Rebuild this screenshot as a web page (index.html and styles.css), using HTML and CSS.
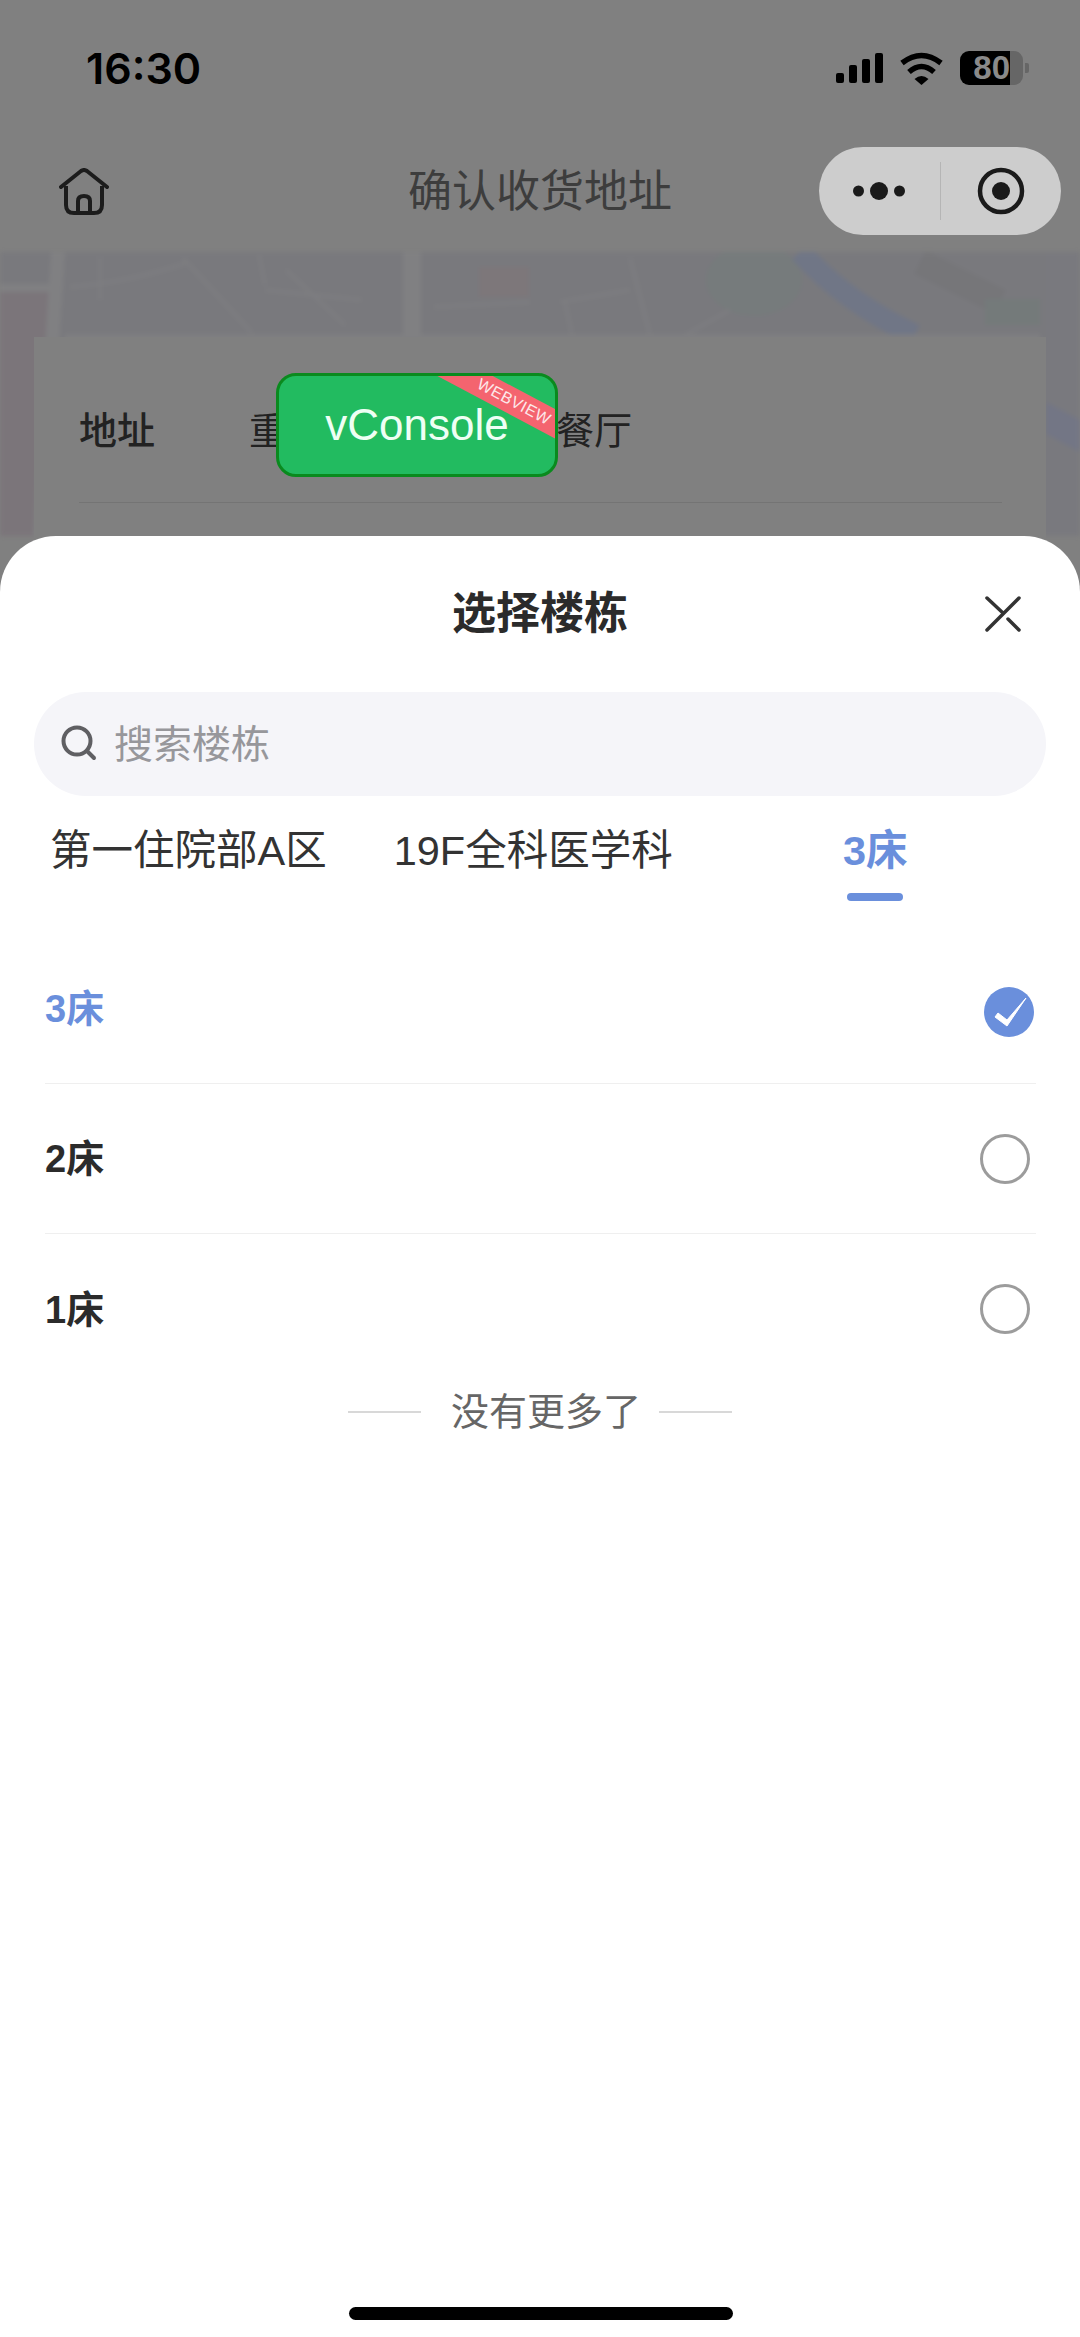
FILE: index.html
```html
<!DOCTYPE html>
<html lang="zh-CN">

<head>
    <meta charset="UTF-8" />
    <meta name="viewport" content="width=device-width, initial-scale=1.0" />
    <title>确认收货地址</title>
    <link rel="stylesheet" href="styles.css">
</head>

<body>
    <div class="screen">
        <!-- Status bar -->
        <div class="status-bar">
            <span class="time">16:30</span>
            <div class="status-icons">
                <svg width="47" height="30" viewBox="0 0 47 30">
                    <rect x="0" y="20" width="8" height="10" rx="2" fill="#000" />
                    <rect x="13" y="12" width="8" height="18" rx="2" fill="#000" />
                    <rect x="26" y="6" width="8" height="24" rx="2" fill="#000" />
                    <rect x="39" y="0" width="8" height="30" rx="2" fill="#000" />
                </svg>
                <svg width="45" height="33" viewBox="0 0 45 33">
                    <path d="M3 11 Q22.5 -4 42 11" fill="none" stroke="#000" stroke-width="5.5" />
                    <path d="M10 20 Q22.5 9 35 20" fill="none" stroke="#000" stroke-width="5.5" />
                    <path d="M15.5 27 Q22.5 21 29.5 27 L22.5 33 Z" fill="#000" />
                </svg>
                <div class="battery">
                    <div class="battery-body">
                        <span class="battery-level">80</span>
                    </div>
                    <div class="battery-tip"></div>
                </div>
            </div>
        </div>

        <!-- Nav bar -->
        <div class="nav-bar">
            <svg class="nav-home" width="50" height="47" viewBox="0 0 50 47">
                <path d="M2 19 L22 3 Q25 1 28 3 L48 19" fill="none" stroke="#1c1c1c" stroke-width="4" stroke-linecap="round" />
                <path d="M7 18 V37 Q7 45 15 45 H35 Q43 45 43 37 V18" fill="none" stroke="#1c1c1c" stroke-width="4" />
                <path d="M19 45 V33 Q19 28 25 28 Q31 28 31 33 V45" fill="none" stroke="#1c1c1c" stroke-width="4" />
            </svg>
            <span class="nav-title">确认收货地址</span>
            <div class="capsule">
                <div class="capsule-part">
                    <svg width="52" height="18" viewBox="0 0 52 18">
                        <circle cx="5.5" cy="9" r="5.5" fill="#1a1a1a" />
                        <circle cx="26" cy="9" r="9" fill="#1a1a1a" />
                        <circle cx="46.5" cy="9" r="5.5" fill="#1a1a1a" />
                    </svg>
                </div>
                <div class="capsule-line"></div>
                <div class="capsule-part">
                    <svg width="48" height="48" viewBox="0 0 48 48">
                        <circle cx="24" cy="24" r="21" fill="none" stroke="#1a1a1a" stroke-width="4.5" />
                        <circle cx="24" cy="24" r="9" fill="#1a1a1a" />
                    </svg>
                </div>
            </div>
        </div>

        <!-- Map behind the address card -->
        <svg class="map" width="1080" height="284" viewBox="0 0 1080 284">
            <rect width="1080" height="284" fill="#79797d" />
            <rect x="0" y="40" width="50" height="244" fill="#7b757a" />
            <rect x="1046" y="0" width="34" height="284" fill="#79797e" />
            <path d="M1046 150 L1080 168 V200 L1046 182 Z" fill="#737685" />
            <ellipse cx="754" cy="28" rx="48" ry="36" fill="#767b7c" />
            <rect x="479" y="15" width="50" height="30" fill="#7d777a" />
            <path d="M920 10 L1000 50" stroke="#767679" stroke-width="26" />
            <path d="M985 60 L1040 60" stroke="#747a7a" stroke-width="26" />
            <path d="M800 0 Q845 50 915 83" fill="none" stroke="#707686" stroke-width="22" />
            <g fill="none" stroke="#808082">
                <path d="M0 36 L50 36" stroke-width="8" />
                <path d="M58 0 L40 284" stroke-width="14" />
                <path d="M412 0 L412 85" stroke-width="18" />
                <path d="M65 85 L1040 85" stroke-width="5" />
            </g>
            <g fill="none" stroke="#7e7e81" stroke-width="3">
                <path d="M100 5 L100 48" />
                <path d="M70 35 Q130 30 186 11" />
                <path d="M183 6 L252 81" />
                <path d="M259 3 L265 33" />
                <path d="M265 38 L362 48" />
                <path d="M286 18 L345 73" />
                <path d="M434 55 L530 50" />
                <path d="M560 50 L630 38" />
                <path d="M630 6 L650 83" />
                <path d="M565 50 L572 83" />
                <path d="M685 83 L730 58" />
            </g>
        </svg>

        <!-- Address card -->
        <div class="card">
            <div class="card-row">
                <span class="card-label">地址</span>
                <div class="card-value">
                    <span>重</span>
                    <span>餐厅</span>
                </div>
            </div>
            <div class="card-line"></div>
        </div>

        <!-- vConsole button -->
        <div class="vconsole">
            vConsole
            <div class="webview-tag">WEBVIEW</div>
        </div>

        <!-- Bottom sheet -->
        <div class="sheet">
            <div class="sheet-head">
                <span class="sheet-title">选择楼栋</span>
                <svg class="sheet-close" width="36" height="36" viewBox="0 0 36 36">
                    <path d="M2 2 L18 17 M23 23 L34 34 M34 2 L2 34" stroke="#333" stroke-width="3.5" stroke-linecap="round" fill="none" />
                </svg>
            </div>

            <div class="search">
                <svg class="search-icon" width="36" height="36" viewBox="0 0 36 36">
                    <circle cx="16" cy="16" r="13.5" fill="none" stroke="#5f5f63" stroke-width="4" />
                    <path d="M26 26 L33 33" stroke="#5f5f63" stroke-width="4" stroke-linecap="round" />
                </svg>
                <span class="search-text">搜索楼栋</span>
            </div>

            <div class="tabs">
                <div class="tab">第一住院部A区</div>
                <div class="tab tab-second">19F全科医学科</div>
                <div class="tab tab-active">3床</div>
            </div>

            <div class="list">
                <div class="row row-active">
                    <span class="row-text">3床</span>
                    <svg class="radio-on" width="50" height="50" viewBox="0 0 50 50">
                        <circle cx="25" cy="25" r="25" fill="#6a8fdc" />
                        <path d="M11 30 L14 26 L23 33 L42 11 L23 39 Z" fill="#fff" stroke="#fff" stroke-width="1" stroke-linejoin="round" />
                    </svg>
                </div>
                <div class="row">
                    <span class="row-text">2床</span>
                    <div class="radio"></div>
                </div>
                <div class="row">
                    <span class="row-text">1床</span>
                    <div class="radio"></div>
                </div>
            </div>

            <div class="no-more">
                <div class="no-more-line"></div>
                <span class="no-more-text">没有更多了</span>
                <div class="no-more-line"></div>
            </div>

            <div class="home-bar"></div>
        </div>
    </div>
</body>

</html>
```

FILE: styles.css
```css
* {
    box-sizing: border-box;
}

body {
    margin: 0;
    font-family: "Liberation Sans", "Noto Sans CJK SC", sans-serif;
}

.screen {
    position: relative;
    width: 1080px;
    height: 2337px;
    overflow: hidden;
    background-color: #808080;
}

/* Status bar */
.status-bar {
    height: 140px;
    padding: 0 51px 4px 86px;
    display: flex;
    justify-content: space-between;
    align-items: center;
}

.time {
    font-family: Inter, "Liberation Sans", sans-serif;
    font-size: 43px;
    line-height: 48px;
    font-weight: 600;
    color: #000;
}

.status-icons {
    display: flex;
    align-items: center;
    gap: 16px;
}

.battery {
    display: flex;
    align-items: center;
    gap: 2px;
}

.battery-body {
    width: 63px;
    height: 34px;
    border-radius: 9px;
    background: linear-gradient(to right, #000 50px, #666 50px);
}

.battery-level {
    display: block;
    width: 50px;
    text-align: right;
    font-size: 33px;
    line-height: 34px;
    font-weight: 700;
    color: #8a8a8a;
}

.battery-tip {
    width: 4px;
    height: 10px;
    border-radius: 0 2px 2px 0;
    background-color: #666;
}

/* Nav bar */
.nav-bar {
    height: 112px;
    display: grid;
    grid-template-columns: 1fr auto 1fr;
    align-items: center;
    padding: 0 19px 10px;
}

.nav-home {
    margin-left: 40px;
}

.nav-title {
    font-size: 44px;
    color: #3d3d3d;
    margin-top: -6px;
}

.capsule {
    justify-self: end;
    width: 242px;
    height: 88px;
    border-radius: 44px;
    background-color: #cdcdcd;
    display: flex;
    align-items: center;
}

.capsule-part {
    flex: 1;
    display: flex;
    justify-content: center;
}

.capsule-line {
    width: 1px;
    height: 58px;
    background-color: #b5b5b5;
}

/* Map */
.map {
    display: block;
    filter: blur(2px);
}

/* Address card */
.card {
    position: absolute;
    left: 34px;
    top: 337px;
    width: 1012px;
    height: 210px;
    background-color: #808080;
    padding: 0 44px 0 45px;
}

.card-row {
    display: flex;
    align-items: center;
    height: 165px;
    padding-top: 15px;
    font-size: 38px;
    color: #222;
}

.card-label {
    width: 170px;
    font-weight: 500;
}

.card-value {
    width: 383px;
    display: flex;
    justify-content: space-between;
}

.card-line {
    height: 1px;
    background-color: #747474;
}

/* vConsole */
.vconsole {
    position: absolute;
    left: 276px;
    top: 373px;
    width: 282px;
    height: 104px;
    overflow: hidden;
    border: 3px solid #0a8a1e;
    border-radius: 20px;
    background-color: #22bb60;
    color: #eefff4;
    font-size: 44px;
    line-height: 98px;
    text-align: center;
}

.webview-tag {
    position: absolute;
    left: 140px;
    top: 13px;
    width: 190px;
    height: 26px;
    background-color: #f4646f;
    color: #fde8ea;
    font-size: 16px;
    line-height: 26px;
    letter-spacing: 0.5px;
    transform: rotate(28deg);
}

/* Bottom sheet */
.sheet {
    position: absolute;
    left: 0;
    right: 0;
    top: 536px;
    bottom: 0;
    background-color: #fff;
    border-radius: 56px 56px 0 0;
}

.sheet-head {
    position: relative;
    height: 156px;
    padding-bottom: 8px;
    display: flex;
    justify-content: center;
    align-items: center;
}

.sheet-title {
    font-size: 44px;
    font-weight: 700;
    color: #2b2b2b;
}

.sheet-close {
    position: absolute;
    right: 59px;
    top: 60px;
}

.search {
    margin: 0 34px;
    height: 104px;
    border-radius: 52px;
    background-color: #f5f5f9;
    display: flex;
    align-items: center;
    gap: 17px;
    padding-left: 27px;
}

.search-icon {
    margin-top: -2px;
}

.search-text {
    font-size: 39px;
    color: #97979b;
    margin-top: -7px;
}

.tabs {
    position: relative;
    height: 96px;
    display: flex;
    padding-top: 27px;
    font-size: 41.5px;
    line-height: 56px;
    color: #333;
}

.tab {
    white-space: nowrap;
    padding-left: 50px;
}

.tab-second {
    padding-left: 67px;
}

.tab-active {
    position: absolute;
    left: 843px;
    padding: 0;
    color: #6a8fdc;
    font-weight: 700;
    width: 64px;
    text-align: center;
}

.tab-active::after {
    content: "";
    display: block;
    width: 56px;
    height: 8px;
    margin: 14px auto 0;
    border-radius: 4px;
    background-color: #6a8fdc;
}

.list {
    margin-top: 42px;
    padding: 0 44px 0 45px;
}

.row {
    height: 150px;
    display: flex;
    justify-content: space-between;
    align-items: center;
    border-bottom: 1px solid #efefef;
    font-size: 38px;
    font-weight: 700;
    color: #2b2b2b;
    padding-right: 6px;
}

.row:last-child {
    border-bottom: none;
}

.row-text {
    margin-top: -6px;
}

.row-active {
    color: #6a8fdc;
    padding-right: 2px;
}

.radio-on {
    margin-top: 6px;
}

.radio {
    width: 50px;
    height: 50px;
    border-radius: 50%;
    border: 3px solid #9c9c9c;
}

.no-more {
    display: flex;
    justify-content: center;
    align-items: center;
    gap: 24px;
    margin-top: 3px;
    height: 50px;
    font-size: 38px;
    color: #666;
}

.no-more-text {
    margin: -7px -6px 0 6px;
}

.no-more-line {
    width: 73px;
    height: 2px;
    background-color: #d8d8d8;
}

.home-bar {
    position: absolute;
    left: 349px;
    bottom: 17px;
    width: 384px;
    height: 13px;
    border-radius: 7px;
    background-color: #000;
}
```
